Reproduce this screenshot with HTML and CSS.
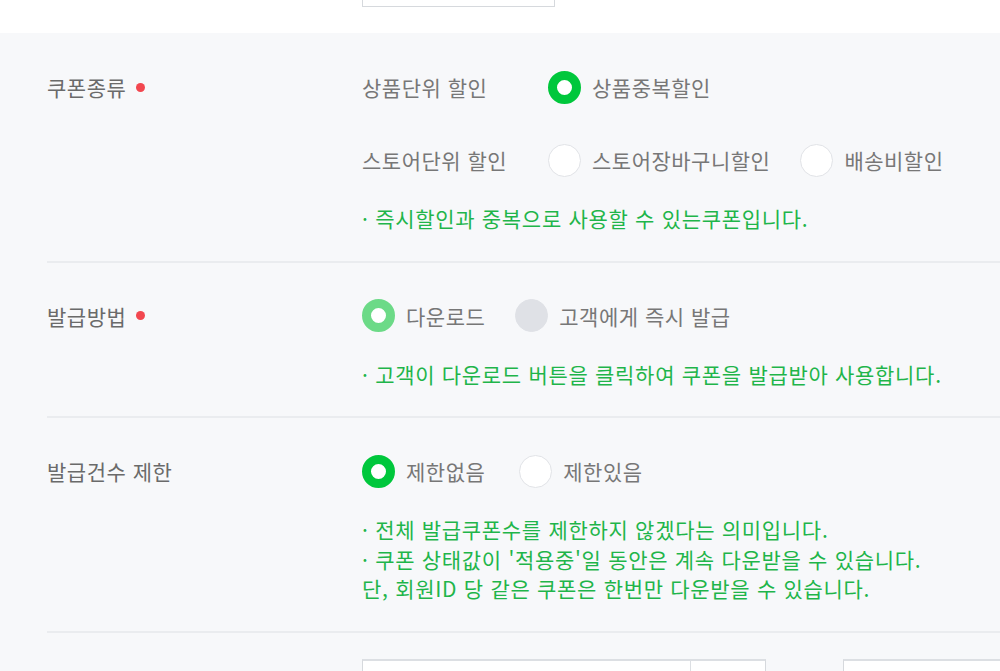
FILE: index.html
```html
<!DOCTYPE html>
<html lang="ko">
<head>
<meta charset="utf-8">
<title>쿠폰 설정</title>
<link rel="stylesheet" href="styles.css">
</head>
<body>
<div class="top">
  <div class="top-input"></div>
</div>
<div class="form">
  <div class="row first">
    <div class="label">쿠폰종류<span class="req"></span></div>
    <div class="content">
      <div class="line">
        <span class="sub">상품단위 할인</span>
        <label class="opt"><span class="radio on"></span><span class="txt">상품중복할인</span></label>
      </div>
      <div class="line gap">
        <span class="sub">스토어단위 할인</span>
        <label class="opt"><span class="radio"></span><span class="txt">스토어장바구니할인</span></label>
        <label class="opt"><span class="radio"></span><span class="txt">배송비할인</span></label>
      </div>
      <p class="help">· 즉시할인과 중복으로 사용할 수 있는쿠폰입니다.</p>
    </div>
  </div>
  <div class="row">
    <div class="label">발급방법<span class="req"></span></div>
    <div class="content">
      <div class="line">
        <label class="opt"><span class="radio on dis"></span><span class="txt">다운로드</span></label>
        <label class="opt"><span class="radio off-dis"></span><span class="txt">고객에게 즉시 발급</span></label>
      </div>
      <p class="help">· 고객이 다운로드 버튼을 클릭하여 쿠폰을 발급받아 사용합니다.</p>
    </div>
  </div>
  <div class="row">
    <div class="label">발급건수 제한</div>
    <div class="content">
      <div class="line">
        <label class="opt wide"><span class="radio on"></span><span class="txt">제한없음</span></label>
        <label class="opt"><span class="radio"></span><span class="txt">제한있음</span></label>
      </div>
      <p class="help">· 전체 발급쿠폰수를 제한하지 않겠다는 의미입니다.<br>· 쿠폰 상태값이 '적용중'일 동안은 계속 다운받을 수 있습니다.<br>단, 회원ID 당 같은 쿠폰은 한번만 다운받을 수 있습니다.</p>
    </div>
  </div>
  <div class="bottom">
    <div class="inp-group">
      <div class="inp-main"></div>
      <div class="inp-unit"></div>
    </div>
    <div class="inp-second"></div>
  </div>
</div>
</body>
</html>
```

FILE: styles.css
```css
* { box-sizing: border-box; }
html, body {
  margin: 0;
  padding: 0;
  background: #ffffff;
  font-family: "Noto Sans CJK KR", "Noto Sans", sans-serif;
  overflow: hidden;
}
.top {
  height: 33px;
  display: flex;
  align-items: flex-end;
  padding-left: 362px;
  overflow: hidden;
  background: #ffffff;
}
.top-input {
  width: 193px;
  height: 40px;
  margin-bottom: 26px;
  border: 1px solid #d6d9dd;
  background: #fff;
  flex-shrink: 0;
}
.form {
  background: #f7f8fa;
  padding-left: 47px;
  height: 638px;
  overflow: hidden;
}
.row {
  display: flex;
  padding: 36px 0 27px;
  border-bottom: 2px solid #eaecef;
}
.row.first { padding-top: 37px; }
.label {
  width: 315px;
  flex-shrink: 0;
  height: 34px;
  display: flex;
  align-items: center;
  font-size: 21px;
  letter-spacing: 0.5px;
  color: #6a6a6a;
}
.req {
  display: inline-block;
  width: 9px;
  height: 9px;
  border-radius: 50%;
  background: #f2474f;
  margin-left: 10px;
}
.content {
  display: flex;
  flex-direction: column;
}
.line {
  display: flex;
  align-items: center;
  height: 34px;
  gap: 30px;
}
.line.gap { margin-top: 39px; }
.sub {
  width: 156px;
  font-size: 21px;
  letter-spacing: 0.5px;
  color: #777;
  white-space: nowrap;
}
.opt {
  display: flex;
  align-items: center;
  gap: 11px;
}
.opt.wide { margin-right: 4px; }
.opt.last { margin-left: 2px; }
.txt {
  font-size: 21px;
  letter-spacing: 0.5px;
  color: #777;
  white-space: nowrap;
}
.radio {
  width: 33px;
  height: 33px;
  border-radius: 50%;
  background: #fff;
  border: 1px solid #e1e3e7;
  flex-shrink: 0;
}
.radio.on {
  border: 9px solid #00c73c;
}
.radio.on.dis {
  border-color: #6cda87;
}
.radio.off-dis {
  background: #dfe1e6;
  border-color: #dfe1e6;
}
.help {
  margin: 27px 0 0;
  font-size: 21px;
  letter-spacing: 0.7px;
  line-height: 29.5px;
  color: #1fb54a;
  white-space: nowrap;
}
.bottom {
  display: flex;
  padding: 26px 0 0 315px;
  gap: 77px;
}
.inp-group {
  display: flex;
  height: 42px;
  border: 1px solid #d6d9dd;
  border-top: 2px solid #dcdfe3;
  background: #fff;
  flex-shrink: 0;
}
.inp-main {
  width: 328px;
  border-right: 1px solid #dcdfe3;
}
.inp-unit { width: 74px; }
.inp-second {
  width: 300px;
  height: 42px;
  border: 1px solid #d6d9dd;
  border-top: 2px solid #dcdfe3;
  background: #fff;
  flex-shrink: 0;
}
```
